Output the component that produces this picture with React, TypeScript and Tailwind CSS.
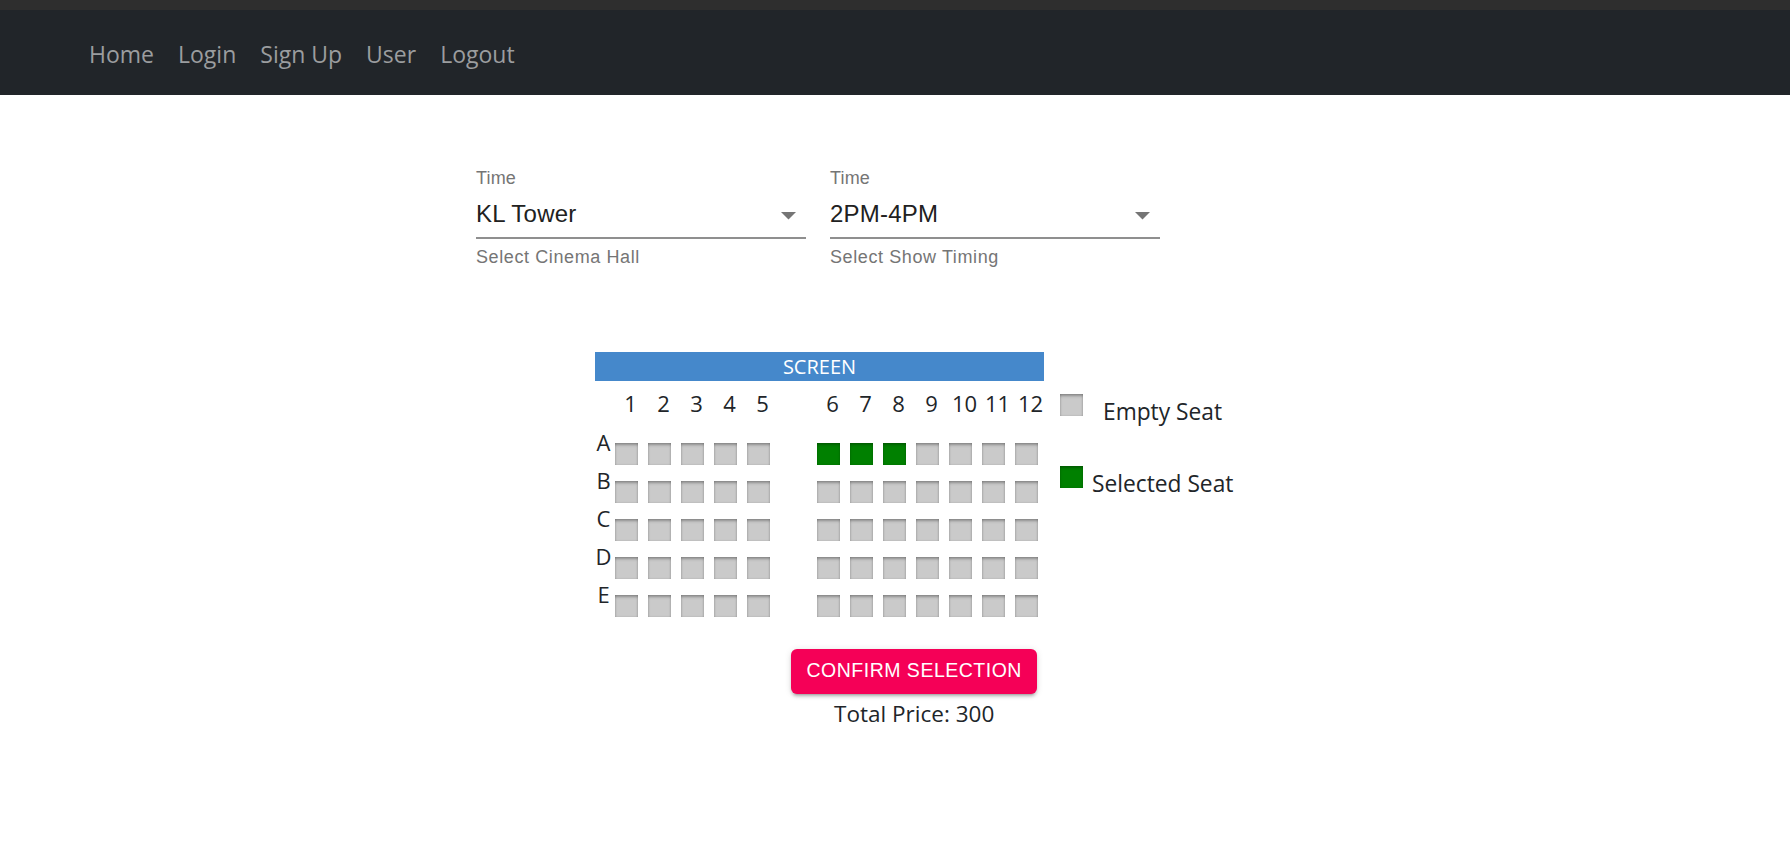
import React from 'react';

const NAV_LINKS = ['Home', 'Login', 'Sign Up', 'User', 'Logout'];
const ROWS = ['A', 'B', 'C', 'D', 'E'];
const LEFT_COLS = [1, 2, 3, 4, 5];
const RIGHT_COLS = [6, 7, 8, 9, 10, 11, 12];
const SELECTED = new Set(['A6', 'A7', 'A8']);

const SEGOE = "font-['Open_Sans',sans-serif]";
const MUI = "font-['Liberation_Sans',Arial,sans-serif]";

function Seat({ selected }: { selected?: boolean }) {
  return (
    <div
      className={
        selected
          ? 'h-[22px] w-[23px] shrink-0 bg-[#008000] shadow-[inset_0_3px_3px_-1px_rgba(0,0,0,0.25),inset_1px_0_2px_rgba(0,0,0,0.08),inset_-1px_0_2px_rgba(0,0,0,0.08)]'
          : 'h-[22px] w-[23px] shrink-0 bg-[#cacaca] shadow-[inset_0_3px_3px_-1px_rgba(0,0,0,0.3),inset_1px_0_2px_rgba(0,0,0,0.1),inset_-1px_0_2px_rgba(0,0,0,0.1)]'
      }
    />
  );
}

function DropArrow() {
  return (
    <svg width="15" height="8" viewBox="0 0 15 8" className="shrink-0">
      <path d="M0 0 L7.5 7.5 L15 0 Z" fill="#757575" />
    </svg>
  );
}

function SelectField({ value, helper }: { value: string; helper: string }) {
  return (
    <div className={`w-[330px] ${MUI}`}>
      <div className="h-[18px] text-[18px] leading-[18px] tracking-[0.17px] text-[#757575]">Time</div>
      <div className="mt-[13px] flex h-[37px] items-start justify-between pr-[10px]">
        <span className="text-[24px] leading-[28px] tracking-[0.22px] text-[#212121]">{value}</span>
        <span className="mt-[12px]">
          <DropArrow />
        </span>
      </div>
      <div className="h-[1.5px] bg-[#8f8f8f]" />
      <div className="mt-[9px] h-[18px] text-[18px] leading-[18px] tracking-[0.6px] text-[#757575]">
        {helper}
      </div>
    </div>
  );
}

function SeatRow({ letter }: { letter: string }) {
  return (
    <div className="flex items-start">
      <div className="-mt-[12px] w-[20px] pr-[3px] text-center text-[22px] leading-[22px]">
        {letter}
      </div>
      <div className="flex gap-[10px]">
        {LEFT_COLS.map((c) => (
          <Seat key={c} selected={SELECTED.has(`${letter}${c}`)} />
        ))}
      </div>
      <div className="ml-[47px] flex gap-[10px]">
        {RIGHT_COLS.map((c) => (
          <Seat key={c} selected={SELECTED.has(`${letter}${c}`)} />
        ))}
      </div>
    </div>
  );
}

function NumberCell({ n }: { n: number }) {
  return <div className="flex w-[23px] shrink-0 justify-center">{n}</div>;
}

export default function App() {
  return (
    <div className="min-h-[867px] bg-white">
      <div className="h-[10px] bg-[#2e2e2e]" />
      <nav className="flex h-[85px] items-center bg-[#212529] pl-[77px] pt-[2px]">
        {NAV_LINKS.map((l) => (
          <a
            key={l}
            className={`px-[12px] text-[23px] leading-[36px] text-[#9b9d9f] ${SEGOE}`}
          >
            {l}
          </a>
        ))}
      </nav>

      <main className="pt-[74px]">
        <div className="ml-[476px] flex gap-[24px]">
          <SelectField value="KL Tower" helper="Select Cinema Hall" />
          <SelectField value="2PM-4PM" helper="Select Show Timing" />
        </div>

        <div className={`ml-[595px] mt-[86px] w-fit text-[#212529] ${SEGOE}`}>
          <div className="flex gap-[16px]">
            <div className="w-[449px]">
              <div className="h-[29px] bg-[#4588cb] text-center text-[20px] leading-[29px] text-white">
                SCREEN
              </div>
              <div className="mt-[7px] flex text-[22px] leading-[30px]">
                <div className="w-[24px]" />
                <div className="flex gap-[10px]">
                  {LEFT_COLS.map((c) => (
                    <NumberCell key={c} n={c} />
                  ))}
                </div>
                <div className="ml-[47px] flex gap-[10px]">
                  {RIGHT_COLS.map((c) => (
                    <NumberCell key={c} n={c} />
                  ))}
                </div>
              </div>
              <div className="mt-[25px] flex flex-col gap-[16px]">
                {ROWS.map((r) => (
                  <SeatRow key={r} letter={r} />
                ))}
              </div>
            </div>

            <div className="mt-[42px] text-[22.75px] leading-[30px]">
              <div className="flex items-start">
                <Seat />
                <span className="ml-[20px] mt-[3px]">Empty Seat</span>
              </div>
              <div className="mt-[39px] flex items-start">
                <Seat selected />
                <span className="ml-[9px] mt-[3px]">Selected Seat</span>
              </div>
            </div>
          </div>

          <div className="mt-[32px] flex flex-col items-center">
            <button
              className={`h-[45px] w-[246px] rounded-[6px] bg-[#f50057] text-[19.5px] uppercase tracking-[0.5px] text-white shadow-[0_4px_2px_-3px_rgba(0,0,0,0.2),0_3px_3px_0_rgba(0,0,0,0.14),0_1px_7px_0_rgba(0,0,0,0.12)] ${MUI}`}
            >
              Confirm Selection
            </button>
            <div className="mt-[5px] text-[22.5px] leading-[30px]">Total Price: 300</div>
          </div>
        </div>
      </main>
    </div>
  );
}
